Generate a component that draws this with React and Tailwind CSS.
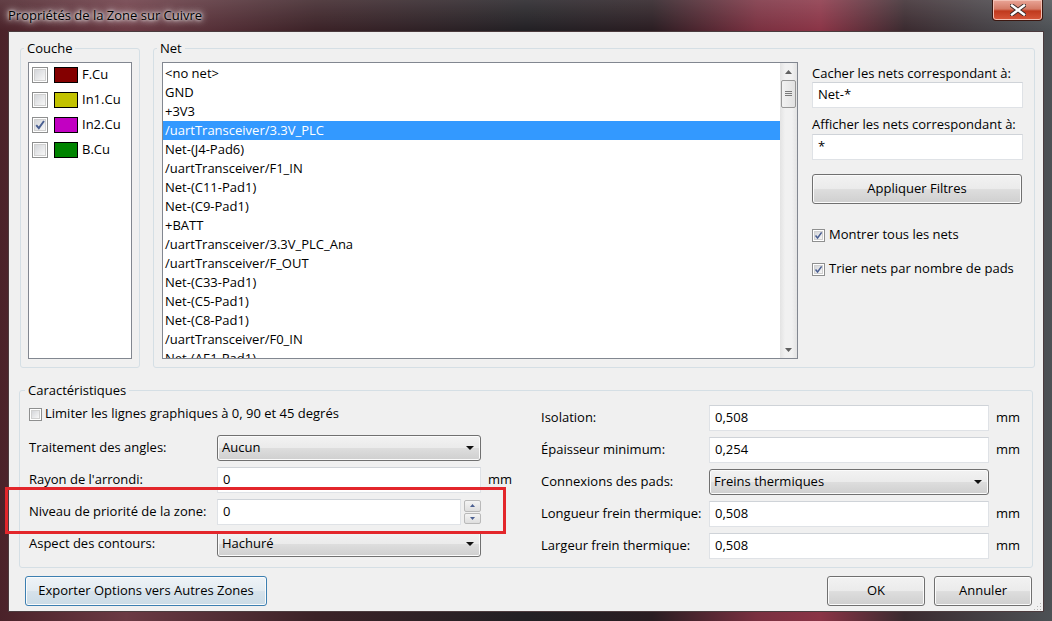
import React from "react";

const nets = [
  "<no net>",
  "GND",
  "+3V3",
  "/uartTransceiver/3.3V_PLC",
  "Net-(J4-Pad6)",
  "/uartTransceiver/F1_IN",
  "Net-(C11-Pad1)",
  "Net-(C9-Pad1)",
  "+BATT",
  "/uartTransceiver/3.3V_PLC_Ana",
  "/uartTransceiver/F_OUT",
  "Net-(C33-Pad1)",
  "Net-(C5-Pad1)",
  "Net-(C8-Pad1)",
  "/uartTransceiver/F0_IN",
  "Net-(AE1-Pad1)",
];

const layers = [
  { name: "F.Cu", color: "bg-[#840000]", checked: false },
  { name: "In1.Cu", color: "bg-[#c2c200]", checked: false },
  { name: "In2.Cu", color: "bg-[#c200c2]", checked: true },
  { name: "B.Cu", color: "bg-[#008400]", checked: false },
];

// win7 style checkbox, size comes in through className
const CheckBox = ({ checked, className = "w-[13px] h-[13px]" }) => (
  <span className={`${className} relative shrink-0 flex border border-[#8e8f8f] bg-white p-[1px]`}>
    <span className="flex-1 border border-[#d0d0d0] bg-[linear-gradient(135deg,#d4d6da,#f7f7f7)]" />
    {checked && (
      <svg viewBox="0 0 13 13" className="absolute inset-0 w-full h-full">
        <path d="M3 6.6 L5.4 9.4 L10.2 2.8" fill="none" stroke="#4a5f91" strokeWidth="1.8" />
      </svg>
    )}
  </span>
);

const TextBox = ({ value, className }) => (
  <div className={`${className} h-[26px] flex items-center bg-white border border-[#dfe2e6] border-t-[#cfd3d8] px-[5px]`}>
    {value}
  </div>
);

const Combo = ({ value, className }) => (
  <div className={`${className} h-[26px] flex items-center justify-between rounded-[3px] border border-[#707070] bg-[linear-gradient(#f2f2f2_0%,#ebebeb_48%,#dddddd_52%,#cfcfcf_100%)] shadow-[inset_0_0_0_1px_#fbfbfb] pl-[4px] pr-[6px]`}>
    <span>{value}</span>
    <svg width="8" height="4" viewBox="0 0 8 4">
      <path d="M0 0H8L4 4Z" fill="#111" />
    </svg>
  </div>
);

const Button = ({ children, className, focused }) => (
  <div
    className={`${className} h-[30px] flex items-center justify-center rounded-[3px] border ${
      focused
        ? "border-[#3c7fb1] bg-[linear-gradient(#eef3f7_0%,#e3ebf1_48%,#d6e2eb_52%,#cbdbe6_100%)]"
        : "border-[#707070] bg-[linear-gradient(#f2f2f2_0%,#ebebeb_48%,#dddddd_52%,#cfcfcf_100%)]"
    } shadow-[inset_0_0_0_1px_#fbfbfb]`}
  >
    {children}
  </div>
);

const Row = ({ label, children, labelW }) => (
  <div className="flex items-center h-[26px]">
    <span className={labelW}>{label}</span>
    {children}
  </div>
);

export default function App() {
  return (
    <div className="relative w-[1052px] h-[621px] flex flex-col px-[8px] pb-[9px] text-[13px] text-black font-['Open_Sans',sans-serif] bg-[linear-gradient(90deg,#4a2229_0%,#6b3a44_12%,#3b2227_30%,#222024_50%,#2a1d22_62%,#7a3040_72%,#8a3446_78%,#3a2a2f_86%,#4d5155_100%)]">
      {/* title bar */}
      <div className="h-[31px] flex justify-between bg-[linear-gradient(#ffffff22,#00000000)] -mx-[8px] pl-[8px] pr-[9px]">
        <span className="pt-[6px] text-[13px] [text-shadow:0_0_6px_#fff,0_0_10px_#fff,0_0_3px_#fff]">
          Propriétés de la Zone sur Cuivre
        </span>
        <div className="w-[51px] h-[21px] flex items-center justify-center rounded-b-[4px] border border-[#3b1710] border-t-0 bg-[linear-gradient(#e9a597_0%,#d47a66_45%,#c0391d_55%,#d7573a_100%)] shadow-[inset_0_0_0_1px_#f3c1b5]">
          <svg width="16" height="12" viewBox="0 0 16 12">
            <path d="M2 1.5 L14 10.5 M14 1.5 L2 10.5" stroke="#3a2a28" strokeWidth="4.2" strokeLinecap="square" />
            <path d="M2 1.5 L14 10.5 M14 1.5 L2 10.5" stroke="#ffffff" strokeWidth="2.4" strokeLinecap="square" />
          </svg>
        </div>
      </div>

      {/* client area */}
      <div className="relative flex-1 flex flex-col bg-[#f0f0f0] border border-[#4b3b3e]">
        {/* top row */}
        <div className="flex pt-[8px] pl-[11px] pr-[8px] gap-[13px]">
          <fieldset className="w-[120px] h-[328px] border border-[#d5dfe5] rounded-[3px] px-[7px]">
            <legend className="-ml-[4px] px-[3px] leading-[16px]">Couche</legend>
            <div className="mt-[6px] h-[297px] bg-white border border-[#828790] pt-[4px] pl-[3px] flex flex-col gap-[9px]">
              {layers.map((l) => (
                <div key={l.name} className="flex items-center h-[16px]">
                  <CheckBox checked={l.checked} className="w-[16px] h-[16px]" />
                  <span className={`ml-[6px] w-[24px] h-[16px] border border-black ${l.color}`} />
                  <span className="ml-[4px] text-[13px]">{l.name}</span>
                </div>
              ))}
            </div>
          </fieldset>

          <fieldset className="flex-1 h-[328px] border border-[#d5dfe5] rounded-[3px] pl-[8px] pr-[11px]">
            <legend className="-ml-[5px] px-[3px] leading-[16px]">Net</legend>
            <div className="mt-[6px] flex gap-[14px]">
              <div className="w-[636px] h-[297px] bg-white border border-[#828790] flex">
                <div className="flex-1 overflow-hidden pt-[1px]">
                  {nets.map((n, i) => (
                    <div
                      key={n}
                      className={`h-[19px] leading-[19px] pl-[2px] text-[13px] ${i === 3 ? "bg-[#3399ff] text-white" : ""}`}
                    >
                      {n}
                    </div>
                  ))}
                </div>
                {/* scrollbar */}
                <div className="w-[17px] flex flex-col bg-[linear-gradient(90deg,#e3e3e3,#f1f1f1_30%,#f1f1f1_70%,#e3e3e3)]">
                  <div className="h-[17px] flex items-center justify-center">
                    <svg width="7" height="4" viewBox="0 0 7 4"><path d="M0 4H7L3.5 0Z" fill="#606060" /></svg>
                  </div>
                  <div className="mx-[1px] h-[28px] rounded-[2px] border border-[#979797] bg-[linear-gradient(90deg,#f2f2f2,#e1e1e1)] flex items-center justify-center">
                    <svg width="7" height="6" viewBox="0 0 7 6"><path d="M0 0.5H7M0 2.5H7M0 4.5H7" stroke="#7a7a7a" strokeWidth="1" /></svg>
                  </div>
                  <div className="flex-1" />
                  <div className="h-[17px] flex items-center justify-center">
                    <svg width="7" height="4" viewBox="0 0 7 4"><path d="M0 0H7L3.5 4Z" fill="#606060" /></svg>
                  </div>
                </div>
              </div>

              <div className="w-[211px] flex flex-col">
                <span className="mt-[3px] leading-[16px] whitespace-nowrap">Cacher les nets correspondant à:</span>
                <TextBox value="Net-*" className="mt-[1px] h-[26px]" />
                <span className="mt-[8px] leading-[16px] whitespace-nowrap">Afficher les nets correspondant à:</span>
                <TextBox value="*" className="mt-[2px]" />
                <Button className="mt-[14px] w-[210px] h-[30px]">Appliquer Filtres</Button>
                <div className="mt-[23px] flex items-center gap-[4px] h-[16px]">
                  <CheckBox checked />
                  <span>Montrer tous les nets</span>
                </div>
                <div className="mt-[18px] flex items-center gap-[4px] h-[16px]">
                  <CheckBox checked />
                  <span>Trier nets par nombre de pads</span>
                </div>
              </div>
            </div>
          </fieldset>
        </div>

        {/* Caractéristiques */}
        <fieldset className="mt-[14px] ml-[10px] mr-[10px] h-[186px] border border-[#d5dfe5] rounded-[3px] pl-[9px] flex">
          <legend className="-ml-[4px] px-[3px] leading-[16px]">Caractéristiques</legend>
          <div className="flex">
            <div className="w-[512px] flex flex-col">
              <div className="mt-[8px] h-[16px] flex items-center gap-[3px]">
                <CheckBox />
                <span>Limiter les lignes graphiques à 0, 90 et 45 degrés</span>
              </div>
              <div className="mt-[13px] flex flex-col gap-[6px]">
                <Row label="Traitement des angles:" labelW="w-[188px]">
                  <Combo value="Aucun" className="w-[264px]" />
                </Row>
                <Row label="Rayon de l'arrondi:" labelW="w-[188px]">
                  <TextBox value="0" className="w-[264px]" />
                  <span className="ml-[7px]">mm</span>
                </Row>
                <Row label="Niveau de priorité de la zone:" labelW="w-[188px]">
                  <TextBox value="0" className="w-[244px]" />
                  <div className="ml-[3px] w-[17px] h-[26px] flex flex-col gap-[1px] py-[1px]">
                    <div className="flex-1 flex items-center justify-center rounded-[2px] border border-[#b9b9b9] bg-[linear-gradient(#f4f4f4,#dedede)]">
                      <svg width="5" height="3" viewBox="0 0 5 3"><path d="M0 3H5L2.5 0Z" fill="#4b5f91" /></svg>
                    </div>
                    <div className="flex-1 flex items-center justify-center rounded-[2px] border border-[#b9b9b9] bg-[linear-gradient(#f4f4f4,#dedede)]">
                      <svg width="5" height="3" viewBox="0 0 5 3"><path d="M0 0H5L2.5 3Z" fill="#4b5f91" /></svg>
                    </div>
                  </div>
                </Row>
                <Row label="Aspect des contours:" labelW="w-[188px]">
                  <Combo value="Hachuré" className="w-[264px]" />
                </Row>
              </div>
            </div>

            <div className="mt-[7px] flex flex-col gap-[6px]">
              <Row label="Isolation:" labelW="w-[168px]">
                <TextBox value="0,508" className="w-[280px]" />
                <span className="ml-[7px]">mm</span>
              </Row>
              <Row label="Épaisseur minimum:" labelW="w-[168px]">
                <TextBox value="0,254" className="w-[280px]" />
                <span className="ml-[7px]">mm</span>
              </Row>
              <Row label="Connexions des pads:" labelW="w-[168px]">
                <Combo value="Freins thermiques" className="w-[280px]" />
              </Row>
              <Row label="Longueur frein thermique:" labelW="w-[168px]">
                <TextBox value="0,508" className="w-[280px]" />
                <span className="ml-[7px]">mm</span>
              </Row>
              <Row label="Largeur frein thermique:" labelW="w-[168px]">
                <TextBox value="0,508" className="w-[280px]" />
                <span className="ml-[7px]">mm</span>
              </Row>
            </div>
          </div>
        </fieldset>

        {/* bottom buttons */}
        <div className="mt-[8px] flex items-center pl-[16px] pr-[11px]">
          <Button focused className="w-[242px]">Exporter Options vers Autres Zones</Button>
          <div className="flex-1" />
          <Button className="w-[98px]">OK</Button>
          <Button className="ml-[9px] w-[98px]">Annuler</Button>
        </div>

        {/* resize grip */}
        <svg width="8" height="8" viewBox="0 0 8 8" className="absolute right-[1px] bottom-[1px]">
          <path d="M6 1h1v1H6zM3 4h1v1H3zM6 4h1v1H6zM0 7h1v1H0zM3 7h1v1H3zM6 7h1v1H6z" fill="#b5b5b5" />
        </svg>
      </div>

      {/* annotation highlight */}
      <div className="absolute left-[5px] top-[487px] w-[501px] h-[47px] border-[3px] border-[#e3262b]" />
    </div>
  );
}
